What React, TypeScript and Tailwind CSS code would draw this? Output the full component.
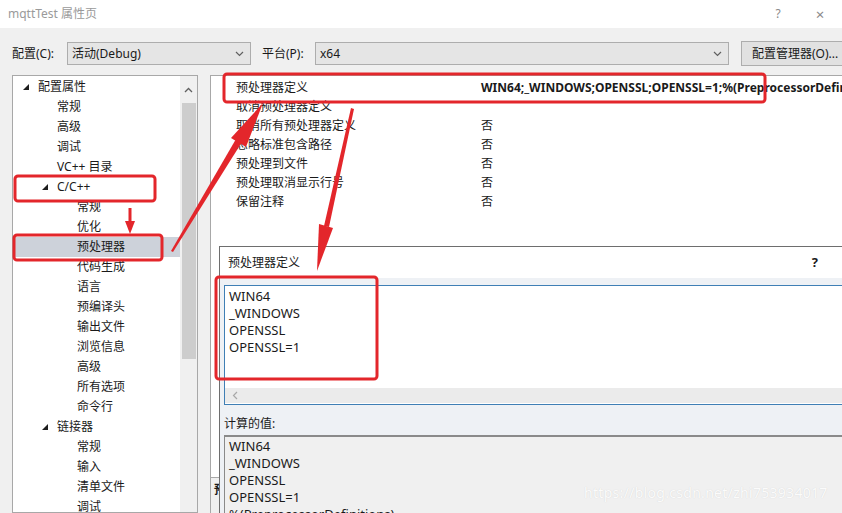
import React from "react";

type TreeItem = { label: string; level: 0 | 1 | 2; open?: boolean; selected?: boolean };

const treeItems: TreeItem[] = [
  { label: "配置属性", level: 0, open: true },
  { label: "常规", level: 1 },
  { label: "高级", level: 1 },
  { label: "调试", level: 1 },
  { label: "VC++ 目录", level: 1 },
  { label: "C/C++", level: 1, open: true },
  { label: "常规", level: 2 },
  { label: "优化", level: 2 },
  { label: "预处理器", level: 2, selected: true },
  { label: "代码生成", level: 2 },
  { label: "语言", level: 2 },
  { label: "预编译头", level: 2 },
  { label: "输出文件", level: 2 },
  { label: "浏览信息", level: 2 },
  { label: "高级", level: 2 },
  { label: "所有选项", level: 2 },
  { label: "命令行", level: 2 },
  { label: "链接器", level: 1, open: true },
  { label: "常规", level: 2 },
  { label: "输入", level: 2 },
  { label: "清单文件", level: 2 },
  { label: "调试", level: 2 },
];

const props: { name: string; value: string; bold?: boolean }[] = [
  { name: "预处理器定义", value: "WIN64;_WINDOWS;OPENSSL;OPENSSL=1;%(PreprocessorDefinitions)", bold: true },
  { name: "取消预处理器定义", value: "" },
  { name: "取消所有预处理器定义", value: "否" },
  { name: "忽略标准包含路径", value: "否" },
  { name: "预处理到文件", value: "否" },
  { name: "预处理取消显示行号", value: "否" },
  { name: "保留注释", value: "否" },
];

const defs = ["WIN64", "_WINDOWS", "OPENSSL", "OPENSSL=1"];

const Triangle = () => (
  <svg width="6" height="6" viewBox="0 0 6 6" className="block">
    <polygon points="6,0 6,6 0,6" fill="#1e1e1e" />
  </svg>
);

const Chevron = () => (
  <svg width="9" height="6" viewBox="0 0 9 6">
    <polyline points="1,1 4.5,4.5 8,1" fill="none" stroke="#606060" strokeWidth="1.2" />
  </svg>
);

function Select({ text, w }: { text: string; w: string }) {
  return (
    <div className={`${w} h-[23px] shrink-0 border border-[#adadad] bg-[#e5e5e5] flex items-center justify-between pl-[4px] pr-[6px]`}>
      <span>{text}</span>
      <Chevron />
    </div>
  );
}

export default function App() {
  return (
    <div
      className="relative w-[842px] h-[513px] overflow-hidden bg-[#f0f0f0] text-[12px] text-[#1a1a1a] leading-none"
      style={{ fontFamily: '"Noto Sans", "Noto Sans CJK SC", sans-serif' }}
    >
      {/* title bar */}
      <div className="h-[28px] bg-white flex items-center justify-between pl-[8px]">
        <span className="text-[#9a9a9a]">mqttTest 属性页</span>
        <div className="flex items-center text-[#8a8a8a]">
          <span className="w-[40px] text-center">?</span>
          <span className="w-[44px] text-center text-[15px]">×</span>
        </div>
      </div>

      {/* config row */}
      <div className="h-[47px] flex items-start pl-[12px] pt-[14px]">
        <span className="w-[55px] h-[23px] flex items-center shrink-0">配置(C):</span>
        <Select text="活动(Debug)" w="w-[184px]" />
        <span className="ml-[11px] w-[53px] h-[23px] flex items-center shrink-0">平台(P):</span>
        <Select text="x64" w="w-[414px]" />
        <div className="ml-[12px] -mt-[1px] h-[25px] w-[110px] border border-[#adadad] bg-[#e1e1e1] flex items-center pl-[10px] shrink-0">
          配置管理器(O)...
        </div>
      </div>

      {/* main */}
      <div className="flex h-[438px]">
        {/* tree */}
        <div className="ml-[12px] w-[186px] shrink-0 border border-[#a8a8a8] bg-white flex">
          <div className="flex-1 pt-[1px]">
            {treeItems.map((it, i) => {
              const pad =
                it.level === 0 ? "pl-[10px]" : it.level === 1 ? (it.open ? "pl-[29px]" : "pl-[44px]") : "pl-[64px]";
              return (
                <div
                  key={i}
                  className={`h-[20px] flex items-center ${pad} ${it.selected ? "bg-[#cdd2da]" : ""}`}
                >
                  {it.open && (
                    <span className="w-[15px] flex items-center">
                      <Triangle />
                    </span>
                  )}
                  <span>{it.label}</span>
                </div>
              );
            })}
          </div>
          <div className="w-[17px] bg-[#f0f0f0] flex flex-col items-center">
            <div className="h-[27px] flex items-center">
              <svg width="9" height="6" viewBox="0 0 9 6">
                <polyline points="1,5 4.5,1.5 8,5" fill="none" stroke="#606060" strokeWidth="1.3" />
              </svg>
            </div>
            <div className="w-[14px] h-[256px] bg-[#cdcdcd]" />
          </div>
        </div>

        {/* property grid */}
        <div className="ml-[12px] flex-1 min-w-0 overflow-hidden border-l border-t border-[#a8a8a8] bg-white flex flex-col">
          <div className="pt-[2px] flex-1">
            {props.map((p, i) => (
              <div key={i} className="h-[19px] flex items-center">
                <span className="w-[270px] pl-[25px] shrink-0">{p.name}</span>
                <span className={`whitespace-nowrap ${p.bold ? "font-bold" : ""}`}>{p.value}</span>
              </div>
            ))}
          </div>
          <div className="h-[36px] border-t border-[#a8a8a8] bg-[#f0f0f0] pl-[3px] pt-[6px]">
            <div className="font-bold">预处理器</div>
          </div>
        </div>
      </div>

      {/* dialog */}
      <div className="absolute left-[219px] top-[246px] w-[640px] h-[280px] border border-[#6e6e6e] bg-[#eef1f5]">
        <div className="h-[31px] bg-white flex items-center justify-between pl-[8px] pr-[40px]">
          <span>预处理器定义</span>
          <span className="font-bold text-[13px]">?</span>
        </div>
        <div className="pl-[4px] pt-[7px]">
          <div className="h-[120px] border border-[#3f7fb5] bg-white flex flex-col">
            <div className="flex-1 pl-[4px] pt-[2px]">
              {defs.map((d) => (
                <div key={d} className="h-[17px] flex items-center text-[13px]">
                  {d}
                </div>
              ))}
            </div>
            <div className="h-[15px] mb-[1px] bg-[#ebebeb] flex items-center pl-[7px]">
              <svg width="6" height="9" viewBox="0 0 6 9">
                <polyline points="5,1 1.5,4.5 5,8" fill="none" stroke="#a8a8a8" strokeWidth="1.2" />
              </svg>
            </div>
          </div>
          <div className="h-[30px] flex items-center pt-[8px]">计算的值:</div>
          <div className="border-t-2 border-l border-[#8a8a8a] bg-[#f0f0f0] pl-[4px] pt-[1px] h-[100px]">
            {[...defs, "%(PreprocessorDefinitions)"].map((d) => (
              <div key={d} className="h-[17px] flex items-center text-[13px]">
                {d}
              </div>
            ))}
          </div>
        </div>
      </div>

      {/* watermark */}
      <div
        className="absolute left-[584px] top-[486px] text-[14px] text-[#fbfbfb] tracking-[0.3px]"
        style={{ textShadow: "0 0 1px #cfcfcf" }}
      >
        https://blog.csdn.net/zhi753934017
      </div>

      {/* red annotations */}
      <svg className="absolute inset-0 pointer-events-none" width="842" height="513" viewBox="0 0 842 513">
        <g fill="none" stroke="#e3262b" strokeWidth="3">
          <rect x="224" y="74" width="541" height="28" rx="3" />
          <rect x="15" y="176" width="140" height="25" rx="3" />
          <rect x="14" y="235" width="148" height="25" rx="3" />
          <rect x="216" y="277" width="161" height="102" rx="3" />
        </g>
        <g fill="#e3262b">
          <polygon points="171,251 173,252 242,142 236,139" />
          <polygon points="263,103 246,147 231,138" />
          <polygon points="351,108 354,109 329,227 324,226" />
          <polygon points="317,271 333,228 319,224" />
          <polygon points="128.5,208 131.5,208 131.5,222 128.5,222" />
          <polygon points="130,234 125,221 135,221" />
        </g>
      </svg>
    </div>
  );
}
